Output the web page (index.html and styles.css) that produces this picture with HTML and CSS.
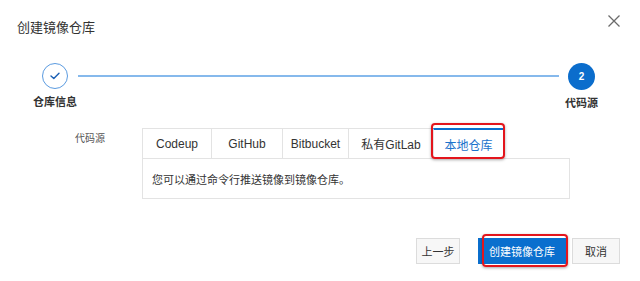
FILE: index.html
```html
<!DOCTYPE html>
<html lang="zh">
<head>
<meta charset="utf-8">
<title>创建镜像仓库</title>
<link rel="stylesheet" href="styles.css">
</head>
<body>
<div class="dialog">
  <div class="header">
    <div class="title">创建镜像仓库</div>
    <svg class="close" width="12" height="12" viewBox="0 0 12 12"><path d="M0.5 0.5 L11.5 11.5 M11.5 0.5 L0.5 11.5" stroke="#6b6b6b" stroke-width="1.3" fill="none"/></svg>
  </div>
  <div class="steps">
    <div class="step">
      <div class="circle done">
        <svg width="10" height="8" viewBox="0 0 10 8"><path d="M1 4 L3.8 6.6 L9 1.2" stroke="#1a5fb4" stroke-width="1.4" fill="none" stroke-linecap="round" stroke-linejoin="round"/></svg>
      </div>
      <div class="step-label">仓库信息</div>
    </div>
    <div class="step-line"></div>
    <div class="step">
      <div class="circle current">2</div>
      <div class="step-label">代码源</div>
    </div>
  </div>
  <div class="form-row">
    <div class="form-label">代码源</div>
    <div class="tabs-wrap">
      <div class="tabs">
        <div class="tab tab-codeup">Codeup</div>
        <div class="tab tab-github">GitHub</div>
        <div class="tab tab-bitbucket">Bitbucket</div>
        <div class="tab tab-gitlab">私有GitLab</div>
        <div class="tab tab-local active">本地仓库<span class="annot annot-tab"></span></div>
      </div>
      <div class="panel">您可以通过命令行推送镜像到镜像仓库。</div>
    </div>
  </div>
  <div class="footer">
    <button class="btn btn-prev">上一步</button>
    <button class="btn btn-primary">创建镜像仓库<span class="annot annot-btn"></span></button>
    <button class="btn btn-cancel">取消</button>
  </div>
</div>
</body>
</html>
```
FILE: styles.css
```css
* { box-sizing: border-box; }
body {
  margin: 0;
  background: #fff;
  font-family: "Liberation Sans", "Noto Sans CJK SC", sans-serif;
  color: #333;
}
.dialog { width: 640px; height: 281px; overflow: hidden; }
.header {
  display: flex;
  justify-content: space-between;
  align-items: flex-start;
  padding: 16px 20px 0 17px;
}
.title { font-size: 13px; line-height: 24px; color: #333; }
.close { margin-top: -1px; display: block; }

.steps {
  display: flex;
  align-items: flex-start;
  margin-top: 23px;
  padding: 0 42px 0 33px;
}
.step { display: flex; flex-direction: column; align-items: center; }
.circle {
  width: 26px; height: 26px; border-radius: 50%;
  display: flex; align-items: center; justify-content: center;
}
.circle.done { border: 1.5px solid #5b9be0; background: #fff; }
.circle.current {
  width: 27px; height: 27px;
  background: #0b6dcc; color: #fff; font-size: 10px; font-weight: bold;
}
.step-label {
  margin-top: 5px;
  font-size: 11px; line-height: 16px; font-weight: bold; color: #333;
  white-space: nowrap;
}
.step-line {
  flex: 1;
  height: 2px;
  margin: 12px 6px 0 1px;
  background: #86b9ec;
}

.form-row { display: flex; margin-top: 17px; padding-left: 75px; }
.form-label {
  width: 67px; font-size: 10px; line-height: 14px; margin-top: 4px; color: #555;
}
.tabs-wrap { width: 428px; }
.tabs { display: flex; }
.tab {
  height: 30px;
  border-top: 1px solid #e3e3e3;
  border-left: 1px solid #e3e3e3;
  display: flex; align-items: center; justify-content: center;
  font-size: 12px; color: #333;
  position: relative;
  white-space: nowrap;
}
.tab-codeup { width: 69px; }
.tab-github { width: 71px; }
.tab-bitbucket { width: 66px; }
.tab-gitlab { width: 85px; }
.tab-local { width: 71px; border-right: 1px solid #e3e3e3; }
.tab.active { border-top: 2px solid #0a6fce; color: #1b73cc; }
.panel {
  height: 41px;
  border: 1px solid #e3e3e3;
  display: flex; align-items: center;
  padding-left: 9px;
  font-size: 11px; color: #333;
}

.annot {
  position: absolute;
  border: 2px solid #e3151c;
  border-radius: 4px;
  box-shadow: 0 1px 3px rgba(0,0,0,0.35);
  pointer-events: none;
}
.annot-tab { left: -3px; right: -2px; top: -7px; bottom: -1px; }

.footer {
  display: flex;
  justify-content: flex-end;
  margin-top: 39px;
  padding-right: 20px;
}
.btn {
  height: 26px;
  font-family: inherit;
  font-size: 11px;
  padding: 0;
  border: 1px solid #dcdcdc;
  background: #f7f7f7;
  color: #333;
  position: relative;
}
.btn-prev { width: 44px; }
.btn-primary {
  width: 88px; margin-left: 18px;
  background: #0a6fce; border-color: #0a6fce; color: #fff;
}
.btn-cancel { width: 48px; margin-left: 6px; }
.annot-btn { left: 3px; right: -3px; top: -5px; bottom: -4px; }
```
